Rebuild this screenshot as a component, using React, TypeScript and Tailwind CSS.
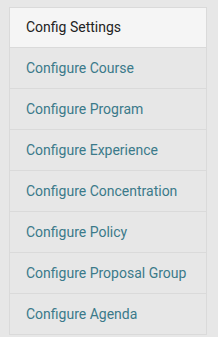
import React from "react";

const items = [
  "Configure Course",
  "Configure Program",
  "Configure Experience",
  "Configure Concentration",
  "Configure Policy",
  "Configure Proposal Group",
  "Configure Agenda",
];

export default function App() {
  return (
    <div
      className="w-[218px] h-[337px] bg-[#e7e7e7] pt-[7px] pl-[9px] overflow-hidden"
      style={{ fontFamily: "Roboto, 'Noto Sans', sans-serif" }}
    >
      <div className="w-[198px] border-x border-t border-[#dadada]">
        <div className="h-[40px] bg-[#f5f5f5] border-b border-[#dadada] flex items-center pl-[16px] text-[14px] text-[#222]">
          Config Settings
        </div>
        {items.map((t) => (
          <div
            key={t}
            className="h-[41px] bg-[#e7e7e7] border-b border-[#dadada] flex items-center pl-[16px] text-[14px] text-[#3b7a8a]"
          >
            {t}
          </div>
        ))}
      </div>
    </div>
  );
}
